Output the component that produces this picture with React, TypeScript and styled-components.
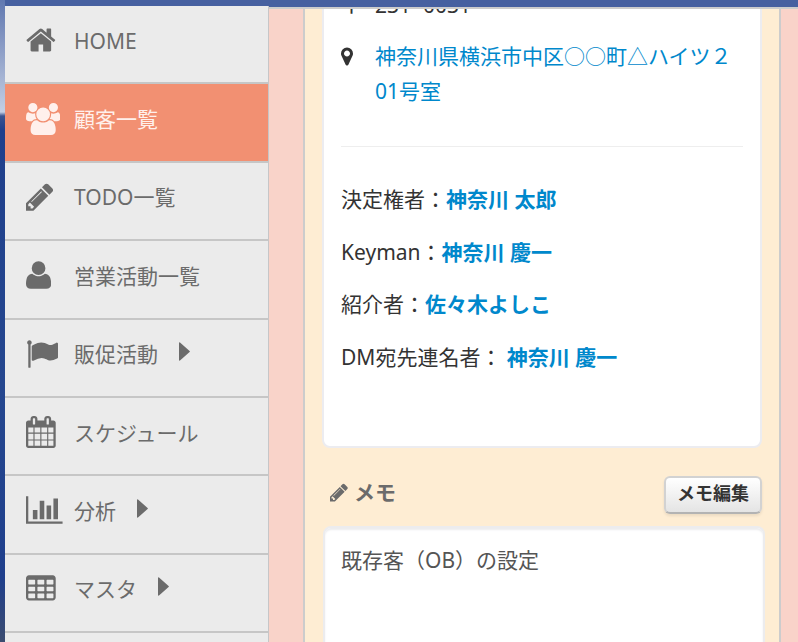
import React from "react";
import styled, { createGlobalStyle } from "styled-components";

const GlobalStyle = createGlobalStyle`
  * { box-sizing: border-box; }
  body {
    margin: 0;
    background: #f9d3c9;
    color: #333;
    font-family: "Noto Sans", "Noto Sans CJK JP", sans-serif;
    font-size: 21px;
    line-height: 35px;
  }
`;

const Page = styled.div`
  display: flex;
  height: 100vh;
  overflow: hidden;
`;

const Backdrop = styled.div`
  flex: 0 0 5px;
  background: linear-gradient(#6078b0 0, #8496c2 40px, #c3cfe4 112px, #3a5490 116px, #1f3f8c 130px, #25478f 60%, #1f3f8c 90%, #3c4c70 100%);
`;

const Frame = styled.div`
  flex: 1;
  min-width: 0;
  display: flex;
  background: #4660a0;
`;

const Nav = styled.nav`
  flex: 0 0 264px;
  margin-top: 6px;
  background: #ebebeb;
  border-right: 1px solid #c6c6c8;
`;

const NavList = styled.ul`
  display: grid;
  grid-template-rows: repeat(8, 1fr);
  min-height: 627px;
  margin: 0;
  padding: 0;
  list-style: none;
`;

const NavItem = styled.li`
  display: flex;
  border-bottom: 2px solid #c6c6c6;
`;

const NavLink = styled.a<{ $active?: boolean }>`
  flex: 1;
  display: flex;
  align-items: center;
  padding: 0 21px 8px;
  text-decoration: none;
  color: ${(p) => (p.$active ? "#fff0ec" : "#6b6b6b")};
  background: ${(p) => (p.$active ? "#f29072" : "transparent")};
`;

const NavIcon = styled.span`
  flex: 0 0 48px;
  display: flex;
`;

const NavLabel = styled.span`
  padding-top: 2px;
`;

const Caret = styled.svg`
  width: 11px;
  height: 19px;
  margin: 0 0 4px 21px;
  fill: currentColor;
`;

const Glyph = styled.svg<{ $size: number }>`
  display: block;
  height: ${(p) => p.$size}px;
  width: auto;
  fill: currentColor;
`;

const Main = styled.main`
  flex: 1;
  min-width: 0;
  display: flex;
  margin-top: 7px;
  padding: 0 17px 0 34px;
  border-top: 2px solid #ccc;
  background: #f9d3c9;
  overflow: hidden;
`;

const Panel = styled.div`
  flex: 1;
  min-width: 0;
  padding: 0 17px;
  border: solid #ccc;
  border-width: 0 2px;
  background: #feedd3;
`;

const Card = styled.section`
  margin-top: -40px;
  padding: 17px 17px 71px;
  border: 2px solid #ececf0;
  border-radius: 8px;
  background: #fff;
`;

const ContactRow = styled.div`
  display: grid;
  grid-template-columns: 34px 1fr;
  margin-bottom: 16px;
`;

const ContactMark = styled.span`
  display: flex;
  align-items: center;
  height: 35px;
`;

const Link = styled.a<{ $strong?: boolean }>`
  color: #0088cc;
  font-weight: ${(p) => (p.$strong ? 700 : 400)};
  text-decoration: none;
`;

const Rule = styled.hr`
  margin: 37px 0 35px;
  border: 0;
  border-top: 1px solid #eee;
`;

const Person = styled.p`
  margin: 0 0 17px;
  &:nth-of-type(odd) { margin-bottom: 18px; }
  &:last-child { margin-bottom: 0; }
`;

const MemoHead = styled.div`
  display: flex;
  align-items: center;
  justify-content: space-between;
  padding: 27px 0 11px 8px;
`;

const MemoTitle = styled.h2`
  display: flex;
  align-items: center;
  gap: 6px;
  margin: 0 0 5px;
  color: #6b6b6b;
  font-size: 21px;
`;

const EditButton = styled.button`
  height: 38px;
  padding: 0 11px 4px;
  border: 2px solid #d2d2d2;
  border-bottom-color: #b3b3b3;
  border-radius: 6px;
  background: linear-gradient(#fff, #e4e4e4);
  box-shadow: 0 2px 3px rgba(0, 0, 0, 0.08);
  color: #333;
  font: 700 18px/30px "Noto Sans", "Noto Sans CJK JP", sans-serif;
`;

const MemoText = styled.textarea`
  display: block;
  width: calc(100% + 2px);
  height: 240px;
  margin-left: 1px;
  padding: 15px 16px;
  border: 2px solid #ececee;
  border-radius: 8px;
  box-shadow: inset 0 2px 2px #ececee;
  background: #fff;
  color: #555;
  font: inherit;
  resize: none;
  outline: none;
`;

type IconName = "home" | "users" | "pencil" | "user" | "flag" | "calendar" | "chart" | "table" | "marker";

const tableCells = [384, 768, 1152]
  .flatMap((y) => [192, 704, 1216].map((x) => `M${x + 32} ${y}h320q14 0 23 9t9 23v192q0 14-9 23t-23 9h-320q-14 0-23-9t-9-23v-192q0-14 9-23t23-9z`))
  .join("");

const icons: Record<IconName, { box: string; d: string; flip?: boolean }> = {
  home: {
    box: "64 0 1664 1792",
    d: "M1472 992v480q0 26-19 45t-45 19h-384v-384h-256v384h-384q-26 0-45-19t-19-45v-480q0-1 .5-3t.5-3l575-474 575 474q1 2 1 6zm223-69l-62 74q-8 9-21 11h-3q-13 0-21-7l-692-577-692 577q-12 8-24 7-13-2-21-11l-62-74q-8-10-7-23.5t11-21.5l719-599q32-26 76-26t76 26l244 204v-195q0-14 9-23t23-9h192q14 0 23 9t9 23v408l219 182q10 8 11 21.5t-7 23.5z",
  },
  users: {
    box: "0 0 1920 1792",
    d: "M593 896q-162 5-265 128h-134q-82 0-138-40.5t-56-118.5q0-353 124-353 6 0 43.5 21t97.5 42.5 119 21.5q67 0 133-23-5 37-5 66 0 139 81 256zm1071 637q0 120-73 189.5t-194 69.5h-874q-121 0-194-69.5t-73-189.5q0-53 3.5-103.5t14-109 26.5-108.5 43-97.5 62-81 85.5-53.5 111.5-20q10 0 43 21.5t73 48 107 48 135 21.5 135-21.5 107-48 73-48 43-21.5q61 0 111.5 20t85.5 53.5 62 81 43 97.5 26.5 108.5 14 109 3.5 103.5zm-1024-1277q0 106-75 181t-181 75-181-75-75-181 75-181 181-75 181 75 75 181zm704 384q0 159-112.5 271.5t-271.5 112.5-271.5-112.5-112.5-271.5 112.5-271.5 271.5-112.5 271.5 112.5 112.5 271.5zm576 225q0 78-56 118.5t-138 40.5h-134q-103-123-265-128 81-117 81-256 0-29-5-66 66 23 133 23 59 0 119-21.5t97.5-42.5 43.5-21q124 0 124 353zm-128-609q0 106-75 181t-181 75-181-75-75-181 75-181 181-75 181 75 75 181z",
  },
  pencil: {
    box: "128 0 1536 1792",
    d: "M491 1536l91-91-235-235-91 91v107h128v128h107zm523-928q0-22-22-22-10 0-17 7l-542 542q-7 7-7 17 0 22 22 22 10 0 17-7l542-542q7-7 7-17zm-54-192l416 416-832 832h-416v-416zm683 96q0 53-37 90l-166 166-416-416 166-165q36-38 90-38 53 0 91 38l235 234q37 39 37 91z",
  },
  user: {
    box: "0 0 1408 1792",
    flip: true,
    d: "M1408 131q0 -120 -73 -189.5t-194 -69.5h-874q-121 0 -194 69.5t-73 189.5q0 53 3.5 103.5t14 109t26.5 108.5t43 97.5t62 81t85.5 53.5t111.5 20q9 0 42 -21.5t74.5 -48t108 -48t133.5 -21.5t133.5 21.5t108 48t74.5 48t42 21.5q61 0 111.5 -20t85.5 -53.5t62 -81t43 -97.5t26.5 -108.5t14 -109t3.5 -103.5zM1088 1024q0 -159 -112.5 -271.5t-271.5 -112.5t-271.5 112.5t-112.5 271.5t112.5 271.5t271.5 112.5t271.5 -112.5t112.5 -271.5z",
  },
  flag: {
    box: "0 0 1792 1792",
    d: "M320 256q0 72-64 110v1266q0 13-9.5 22.5t-22.5 9.5h-64q-13 0-22.5-9.5t-9.5-22.5v-1266q-64-38-64-110 0-53 37.5-90.5t90.5-37.5 90.5 37.5 37.5 90.5zm1472 64v763q0 25-12.5 38.5t-39.5 27.5q-215 116-369 116-61 0-123.5-22t-108.5-48-115.5-48-142.5-22q-192 0-464 146-17 9-33 9-26 0-45-19t-19-45v-742q0-32 31-55 21-14 79-43 236-120 421-120 107 0 200 29t219 88q38 19 88 19 54 0 117.5-21t110-47 88-47 54.5-21q26 0 45 19t19 45z",
  },
  calendar: {
    box: "64 0 1664 1792",
    d: "M192 1664h288v-288h-288v288zm352 0h320v-288h-320v288zm-352-352h288v-320h-288v320zm352 0h320v-320h-320v320zm-352-384h288v-288h-288v288zm736 736h320v-288h-320v288zm-384-736h320v-288h-320v288zm768 736h288v-288h-288v288zm-384-352h320v-320h-320v320zm-352-864v-288q0-13-9.5-22.5t-22.5-9.5h-64q-13 0-22.5 9.5t-9.5 22.5v288q0 13 9.5 22.5t22.5 9.5h64q13 0 22.5-9.5t9.5-22.5zm736 864h288v-320h-288v320zm-384-384h320v-288h-320v288zm384 0h288v-288h-288v288zm32-480v-288q0-13-9.5-22.5t-22.5-9.5h-64q-13 0-22.5 9.5t-9.5 22.5v288q0 13 9.5 22.5t22.5 9.5h64q13 0 22.5-9.5t9.5-22.5zm384-64v1280q0 52-38 90t-90 38h-1408q-52 0-90-38t-38-90v-1280q0-52 38-90t90-38h128v-96q0-66 47-113t113-47h64q66 0 113 47t47 113v96h384v-96q0-66 47-113t113-47h64q66 0 113 47t47 113v96h128q52 0 90 38t38 90z",
  },
  chart: {
    box: "0 0 2048 1792",
    d: "M640 896v512h-256v-512h256zm384-512v1024h-256v-1024h256zm1024 1152v128h-2048v-1536h128v1408h1920zm-640-896v768h-256v-768h256zm384-384v1152h-256v-1152h256z",
  },
  table: {
    box: "64 0 1664 1792",
    d: `M1728 288v1088q0 66-47 113t-113 47h-1344q-66 0-113-47t-47-113v-1088q0-66 47-113t113-47h1344q66 0 113 47t47 113z${tableCells}`,
  },
  marker: {
    box: "384 0 1024 1792",
    d: "M1152 640q0-106-75-181t-181-75-181 75-75 181 75 181 181 75 181-75 75-181zm256 0q0 109-33 179l-364 774q-16 33-47.5 52t-67.5 19-67.5-19-46.5-52l-365-774q-33-70-33-179 0-212 150-362t362-150 362 150 150 362z",
  },
};

function Icon({ name, size }: { name: IconName; size: number }) {
  const { box, d, flip } = icons[name];
  return (
    <Glyph $size={size} viewBox={box} aria-hidden="true">
      <path fillRule="evenodd" d={d} transform={flip ? "translate(0 1536) scale(1 -1)" : undefined} />
    </Glyph>
  );
}

const menu: { label: string; icon: IconName; active?: boolean; sub?: boolean }[] = [
  { label: "HOME", icon: "home" },
  { label: "顧客一覧", icon: "users", active: true },
  { label: "TODO一覧", icon: "pencil" },
  { label: "営業活動一覧", icon: "user" },
  { label: "販促活動", icon: "flag", sub: true },
  { label: "スケジュール", icon: "calendar" },
  { label: "分析", icon: "chart", sub: true },
  { label: "マスタ", icon: "table", sub: true },
];

const people = [
  { role: "決定権者：", name: "神奈川 太郎" },
  { role: "Keyman：", name: "神奈川 慶一" },
  { role: "紹介者：", name: "佐々木よしこ" },
  { role: "DM宛先連名者： ", name: "神奈川 慶一" },
];

export default function App() {
  return (
    <Page lang="ja">
      <GlobalStyle />
      <Backdrop />
      <Frame>
        <Nav>
          <NavList>
            {menu.map((item) => (
              <NavItem key={item.label}>
                <NavLink href="#" $active={item.active} aria-current={item.active ? "page" : undefined}>
                  <NavIcon>
                    <Icon name={item.icon} size={32} />
                  </NavIcon>
                  <NavLabel>{item.label}</NavLabel>
                  {item.sub && (
                    <Caret viewBox="0 0 11 19" aria-hidden="true">
                      <path d="M0 1q0-1 1-.6L10.600 9q.6.5 0 1L1 18.600q-1 .4-1-.6z" />
                    </Caret>
                  )}
                </NavLink>
              </NavItem>
            ))}
          </NavList>
        </Nav>
        <Main>
          <Panel>
            <Card>
              <ContactRow>
                <ContactMark>〒</ContactMark>
                <span>231−0031</span>
              </ContactRow>
              <ContactRow>
                <ContactMark>
                  <Icon name="marker" size={21} />
                </ContactMark>
                <Link href="#">神奈川県横浜市中区○○町△ハイツ２01号室</Link>
              </ContactRow>
              <Rule />
              {people.map((p) => (
                <Person key={p.role}>
                  {p.role}
                  <Link href="#" $strong>{p.name}</Link>
                </Person>
              ))}
            </Card>
            <MemoHead>
              <MemoTitle id="memo-title">
                <Icon name="pencil" size={21} />
                メモ
              </MemoTitle>
              <EditButton type="button">メモ編集</EditButton>
            </MemoHead>
            <MemoText aria-labelledby="memo-title" defaultValue="既存客（OB）の設定" spellCheck={false} />
          </Panel>
        </Main>
      </Frame>
    </Page>
  );
}
